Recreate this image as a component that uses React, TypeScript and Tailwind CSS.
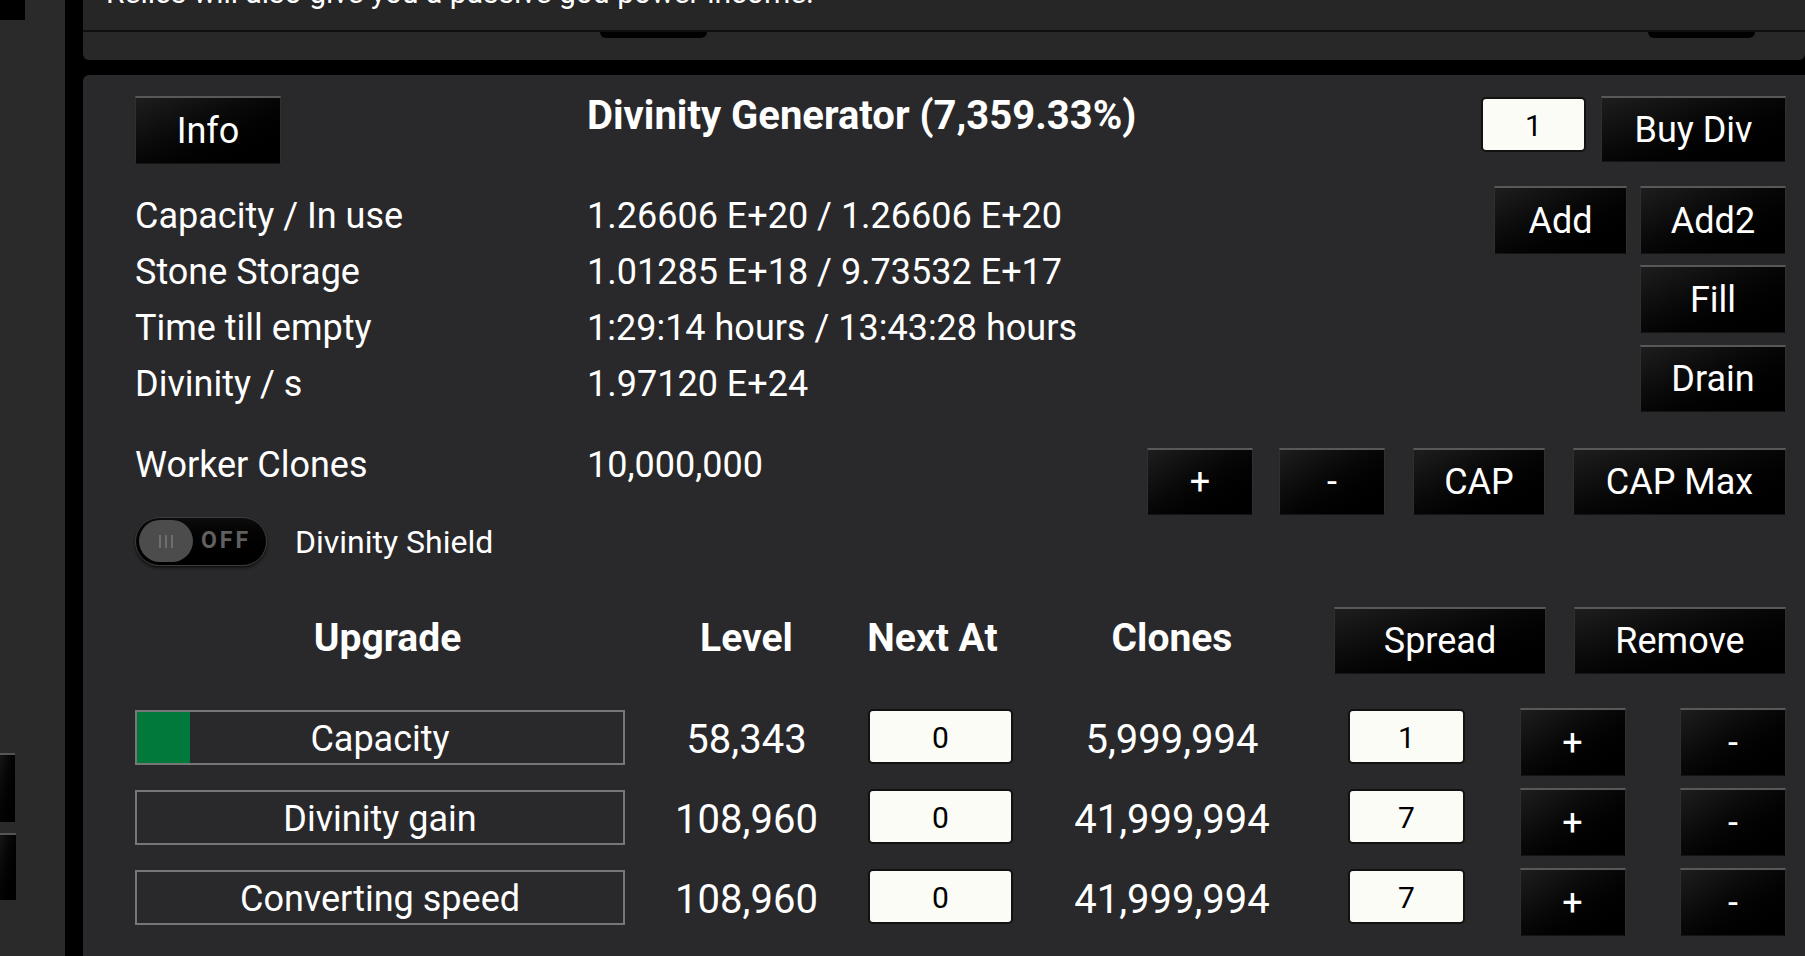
import React from 'react'

// black glossy game button
const btn =
  "flex items-center justify-center bg-gradient-to-br from-[#1e1e1e] via-[#060606] to-black border-t-2 border-t-[#585858] border-x border-x-[#2f2f2f] border-b border-b-[#141414] text-white text-[36px] leading-none"

const box =
  "flex items-center justify-center bg-[#fcfcf7] border-2 border-[#121212] rounded-[5px] pt-[3px] text-black text-[30px] leading-none"

const stats = [
  ["Capacity / In use", "1.26606 E+20 / 1.26606 E+20"],
  ["Stone Storage", "1.01285 E+18 / 9.73532 E+17"],
  ["Time till empty", "1:29:14 hours / 13:43:28 hours"],
  ["Divinity / s", "1.97120 E+24"],
]

const upgrades = [
  { name: "Capacity", level: "58,343", clones: "5,999,994", amount: "1", fill: 53 },
  { name: "Divinity gain", level: "108,960", clones: "41,999,994", amount: "7", fill: 0 },
  { name: "Converting speed", level: "108,960", clones: "41,999,994", amount: "7", fill: 0 },
]

function Toggle() {
  return (
    <div className="flex h-[49px] w-[132px] items-center rounded-full border border-[#3c3c3c] bg-gradient-to-b from-[#0c0c0c] to-black shadow-[0_2px_3px_rgba(0,0,0,0.6)]">
      <div className="ml-[3px] flex h-[42px] w-[54px] items-center justify-center gap-[4px] rounded-full bg-[#4c4c4c]">
        <span className="h-[13px] w-[2px] bg-[#6e6e6e]" />
        <span className="h-[13px] w-[2px] bg-[#6e6e6e]" />
        <span className="h-[13px] w-[2px] bg-[#6e6e6e]" />
      </div>
      <span className="ml-[8px] text-[23px] font-bold tracking-[3px] text-[#606060]">OFF</span>
    </div>
  )
}

export default function App() {
  return (
    <div className="flex h-[956px] w-[1805px] overflow-hidden bg-black font-['Roboto',sans-serif] text-white">
      {/* left panel, mostly off screen */}
      <div className="flex w-[65px] shrink-0 flex-col bg-[#2a2a2a]">
        <div className="h-[20px] w-[25px] bg-black" />
        <div className="mt-[733px] h-[69px] w-[15px] border-t-2 border-t-[#555] bg-gradient-to-br from-[#151515] to-black" />
        <div className="mt-[11px] h-[67px] w-[16px] border-t-2 border-t-[#555] bg-gradient-to-br from-[#151515] to-black" />
      </div>
      <div className="w-[18px] shrink-0" />

      <div className="flex min-w-0 flex-1 flex-col">
        {/* previous card, cut off at the top */}
        <div className="h-[60px] shrink-0 overflow-hidden rounded-b-[6px] bg-[#282828]">
          <div className="h-[30px] overflow-hidden bg-[#262626] pl-[23px]">
            <p className="-mt-[25px] whitespace-nowrap text-[30px] leading-[35px]">
              Relics will also give you a passive god power income.
            </p>
          </div>
          <div className="h-[2px] bg-[#0e0e0e]" />
          <div className="flex">
            <div className="ml-[517px] h-[6px] w-[107px] rounded-b-[10px] bg-black" />
            <div className="ml-[941px] h-[6px] w-[107px] rounded-b-[10px] bg-black" />
          </div>
        </div>

        {/* Divinity generator card */}
        <div className="mt-[15px] flex-1 rounded-tl-[6px] bg-[#29292b] pl-[52px] pr-[19px] pt-[21px]">
          <div className="flex justify-between">
            <div className="flex flex-col">
              <div className="flex items-start">
                <div className={`${btn} h-[68px] w-[146px]`}>Info</div>
                <h2 className="ml-[306px] whitespace-nowrap text-[40px] font-bold leading-[40px]">
                  Divinity Generator (7,359.33%)
                </h2>
              </div>
              <div className="mt-[24px] grid grid-cols-[452px_auto] text-[36px] leading-[56px]">
                {stats.map(([label, value]) => (
                  <React.Fragment key={label}>
                    <span>{label}</span>
                    <span className="whitespace-nowrap">{value}</span>
                  </React.Fragment>
                ))}
              </div>
            </div>

            <div className="flex flex-col items-end">
              <div className="flex items-start gap-[15px]">
                <div className={`${box} mt-[1px] h-[55px] w-[105px]`}>1</div>
                <div className={`${btn} h-[66px] w-[185px]`}>Buy Div</div>
              </div>
              <div className="mt-[24px] flex gap-[13px]">
                <div className={`${btn} h-[68px] w-[133px]`}>Add</div>
                <div className={`${btn} h-[68px] w-[146px]`}>Add2</div>
              </div>
              <div className={`${btn} mt-[11px] h-[68px] w-[146px]`}>Fill</div>
              <div className={`${btn} mt-[12px] h-[67px] w-[146px]`}>Drain</div>
            </div>
          </div>

          {/* worker clones */}
          <div className="mt-[24px] flex items-start">
            <div className="mt-[1px] grid grid-cols-[452px_auto] text-[36px] leading-[56px]">
              <span>Worker Clones</span>
              <span>10,000,000</span>
            </div>
            <div className="ml-auto mt-[12px] flex">
              <div className={`${btn} h-[67px] w-[106px]`}>+</div>
              <div className={`${btn} ml-[26px] h-[67px] w-[106px]`}>-</div>
              <div className={`${btn} ml-[28px] h-[67px] w-[132px]`}>CAP</div>
              <div className={`${btn} ml-[28px] h-[67px] w-[213px]`}>CAP Max</div>
            </div>
          </div>

          <div className="mt-[1px] flex items-center">
            <Toggle />
            <span className="ml-[28px] pt-[2px] text-[32px]">Divinity Shield</span>
          </div>

          {/* upgrades table */}
          <div className="mt-[41px] grid h-[67px] grid-cols-[490px_243px_145px_318px_1fr] items-center text-[39px] font-bold">
            <span className="-mt-[4px] ml-[15px] text-center">Upgrade</span>
            <span className="-mt-[4px] text-center">Level</span>
            <span className="-mt-[4px] -ml-[16px] whitespace-nowrap text-center">Next At</span>
            <span className="-mt-[4px] text-center">Clones</span>
            <div className="flex justify-end gap-[28px] font-normal">
              <div className={`${btn} h-[67px] w-[212px]`}>Spread</div>
              <div className={`${btn} h-[67px] w-[212px]`}>Remove</div>
            </div>
          </div>

          <div className="mt-[34px] flex flex-col gap-[12px]">
            {upgrades.map((u) => (
              <div key={u.name} className="grid h-[68px] grid-cols-[490px_243px_145px_318px_1fr] items-start">
                <div className="relative mt-[2px] flex h-[55px] items-center justify-center border-2 border-[#777] pt-[2px] text-[36px]">
                  {u.fill > 0 && (
                    <div className="absolute inset-y-0 left-0 bg-[#00793b]" style={{ width: u.fill }} />
                  )}
                  <span className="relative">{u.name}</span>
                </div>
                <span className="text-center text-[40px] leading-[64px]">{u.level}</span>
                <div className={`${box} mt-[1px] h-[55px]`}>0</div>
                <span className="text-center text-[40px] leading-[64px]">{u.clones}</span>
                <div className="flex items-start justify-between pl-[17px]">
                  <div className={`${box} mt-[1px] h-[55px] w-[117px]`}>{u.amount}</div>
                  <div className={`${btn} h-[68px] w-[106px]`}>+</div>
                  <div className={`${btn} h-[68px] w-[106px]`}>-</div>
                </div>
              </div>
            ))}
          </div>
        </div>
      </div>
    </div>
  )
}
